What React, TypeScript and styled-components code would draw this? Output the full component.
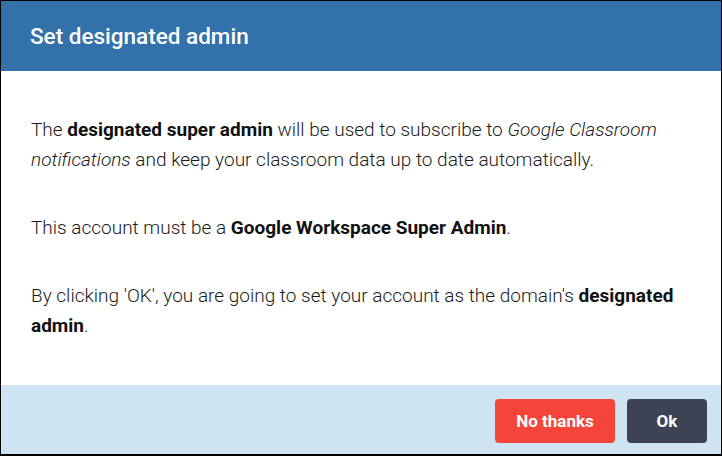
import React from "react";
import styled, { createGlobalStyle } from "styled-components";

const GlobalStyle = createGlobalStyle`
  html, body {
    margin: 0;
    padding: 0;
    background: #ffffff;
  }
  body {
    font-family: Roboto, "Liberation Sans", Arial, sans-serif;
  }
`;

const Dialog = styled.div`
  width: 722px;
  height: 456px;
  box-sizing: border-box;
  border: 1px solid #000000;
  border-bottom-width: 2px;
  display: flex;
  flex-direction: column;
  background: #ffffff;
`;

const Header = styled.header`
  height: 70px;
  flex-shrink: 0;
  display: flex;
  align-items: center;
  padding: 0 29px;
  background-color: #3271a9;
`;

const Title = styled.h1`
  margin: 0;
  font-size: 22.5px;
  font-weight: 500;
  color: #ffffff;
`;

const Body = styled.div`
  flex: 1;
  padding: 44px 30px 0 30px;
  display: flex;
  flex-direction: column;
  gap: 38px;
`;

const Paragraph = styled.p`
  margin: 0;
  font-size: 19px;
  line-height: 30px;
  font-weight: 300;
  color: #1a1a1a;

  strong {
    font-weight: 700;
    color: #111111;
  }

  em {
    font-style: italic;
  }
`;

const Footer = styled.footer`
  height: 69px;
  flex-shrink: 0;
  display: flex;
  justify-content: flex-end;
  align-items: flex-start;
  gap: 12px;
  padding: 14px 14px 0 0;
  box-sizing: border-box;
  background-color: #cfe4f3;
`;

const Button = styled.button<{ $variant: "danger" | "dark" }>`
  height: 44px;
  width: ${(p) => (p.$variant === "danger" ? "120px" : "80px")};
  padding: 0;
  border: none;
  border-radius: 4px;
  font-family: Roboto, "Liberation Sans", Arial, sans-serif;
  font-size: 17px;
  font-weight: 700;
  color: #ffffff;
  cursor: pointer;
  background-color: ${(p) => (p.$variant === "danger" ? "#f5443a" : "#3d4354")};
`;

const App: React.FC = () => {
  return (
    <>
      <GlobalStyle />
      <Dialog>
        <Header>
          <Title>Set designated admin</Title>
        </Header>
        <Body>
          <Paragraph>
            The <strong>designated super admin</strong> will be used to subscribe to{" "}
            <em>Google Classroom notifications</em> and keep your classroom data up to date
            automatically.
          </Paragraph>
          <Paragraph>
            This account must be a <strong>Google Workspace Super Admin</strong>.
          </Paragraph>
          <Paragraph>
            By clicking 'OK', you are going to set your account as the domain's{" "}
            <strong>designated admin</strong>.
          </Paragraph>
        </Body>
        <Footer>
          <Button $variant="danger">No thanks</Button>
          <Button $variant="dark">Ok</Button>
        </Footer>
      </Dialog>
    </>
  );
};

export default App;
